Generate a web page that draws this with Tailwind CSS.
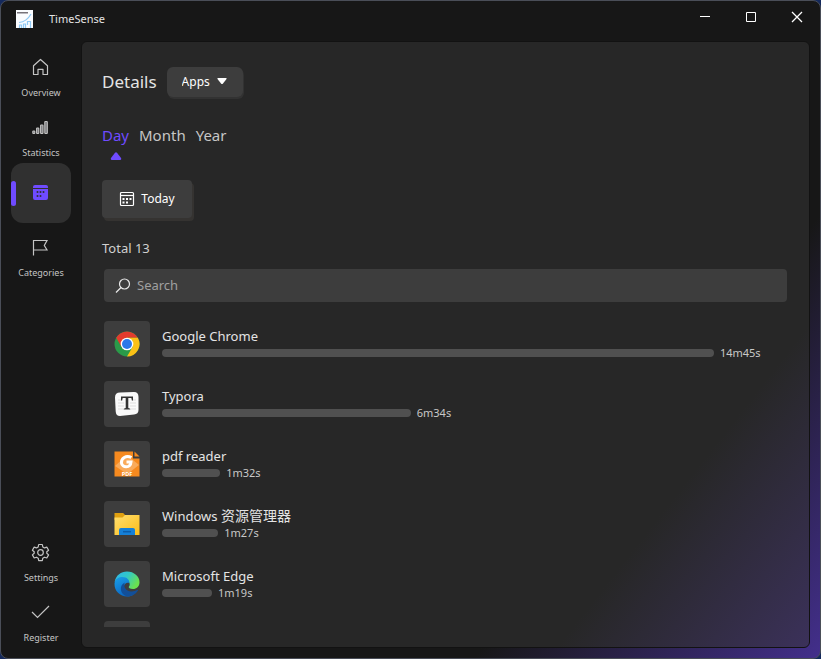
<!DOCTYPE html>
<html lang="en">
<head>
<meta charset="utf-8">
<meta name="viewport" content="width=device-width, initial-scale=1">
<title>TimeSense</title>
<script src="https://cdn.jsdelivr.net/npm/@tailwindcss/browser@4"></script>
</head>
<body class="h-screen overflow-hidden bg-[#14295c] font-['Noto_Sans','Noto_Sans_CJK_SC',sans-serif] text-[#e4e4e4]">
<div class="flex h-full flex-col rounded-lg border border-[#4a4e58] bg-[linear-gradient(128deg,#171717_74%,#432f8c_100%)]">
  <header class="flex h-9 shrink-0 items-center justify-between pl-[15px]">
    <div class="flex items-center gap-[15px]">
      <svg class="size-[18px]" viewBox="0 0 18 18" aria-hidden="true">
        <path fill="#fafcff" d="M0 0h17v18H0z"/>
        <path fill="#77737a" d="M1 2h11v1.500H1z"/>
        <path fill="none" stroke="#8fc9f5" stroke-width="1.200" d="M3 12.500c5-.5 9-3 12-8.500M3.500 18v-3h2v3M7.500 18v-4h2v4M11.500 15v-3.500h3V18"/>
      </svg>
      <span class="text-[11px] leading-4">TimeSense</span>
    </div>
    <div class="flex h-8 self-start text-white">
      <button class="grid w-[46px] place-items-center" aria-label="Minimize"><svg class="size-3" viewBox="0 0 12 12" fill="none" stroke="currentColor"><path d="M1 5.500h10"/></svg></button>
      <button class="grid w-[46px] place-items-center" aria-label="Maximize"><svg class="size-3" viewBox="0 0 12 12" fill="none" stroke="currentColor"><path d="M1.500 1.500h9v9h-9z"/></svg></button>
      <button class="grid w-[46px] place-items-center" aria-label="Close"><svg class="size-3" viewBox="0 0 12 12" fill="none" stroke="currentColor" stroke-width="1.300"><path d="m1 1 10 10M11 1 1 11"/></svg></button>
    </div>
  </header>

  <div class="flex min-h-0 flex-1 pt-1 pr-2.5 pb-2.5">
    <nav class="flex w-20 shrink-0 flex-col items-center pt-0.5 text-[9px] leading-3 text-[#c4c4c4]">
      <a href="#" class="flex h-15 w-15 flex-col items-center gap-2.5 pt-3.5">
        <svg class="size-5" viewBox="0 0 20 20" fill="none" stroke="currentColor" stroke-width="1.200" stroke-linejoin="round"><path d="M2.500 8.800 9.500 2.500l7 6.300V17.500H12v-5.200H7v5.200H2.500z"/></svg>Overview
      </a>
      <a href="#" class="flex h-15 w-15 flex-col items-center gap-2.5 pt-3.5">
        <svg class="size-5" viewBox="0 0 20 20" fill="#77777a" stroke="currentColor" stroke-width="1.100"><rect x="1.800" y="14" width="2" height="2.500" rx=".6"/><rect x="5.600" y="11" width="2.200" height="5.500" rx=".6"/><rect x="9.600" y="8" width="2.400" height="8.500" rx=".6"/><rect x="13.800" y="4.500" width="2.500" height="12" rx=".6"/></svg>Statistics
      </a>
      <a href="#" aria-label="Details" aria-current="page" class="flex h-15 w-15 items-center rounded-xl bg-[#303030] text-[#6f4bff]">
        <span class="h-[25px] w-[5px] rounded-sm bg-current"></span>
        <svg class="mb-0.5 ml-4 size-[17px]" viewBox="0 0 17 17"><path fill="currentColor" d="M3 1h11q2 0 2 2v11q0 2-2 2H3q-2 0-2-2V3q0-2 2-2z"/><path stroke="#303030" d="M1 4.500h15"/><g fill="#303030"><circle cx="8.500" cy="8" r="1"/><circle cx="11.500" cy="8" r="1"/><circle cx="5.500" cy="8" r="1"/><circle cx="5.500" cy="12" r="1"/><circle cx="8.500" cy="12" r="1"/></g></svg>
      </a>
      <a href="#" class="flex h-15 w-15 flex-col items-center gap-2.5 pt-3.5">
        <svg class="size-5" viewBox="0 0 20 20" fill="none" stroke="currentColor" stroke-width="1.200"><path d="M2.500 18.500V3.500h13.500L13.300 8.500l2.700 4.500H2.500"/></svg>Categories
      </a>
      <a href="#" class="mt-auto flex h-15 w-15 flex-col items-center gap-2.5 pt-3.5">
        <svg class="size-5" viewBox="0 0 20 20" fill="none" stroke="currentColor" stroke-width="1.200" stroke-linejoin="round"><path d="M7.700 2.500h3.600l.5 2.400 1.700 1 2.300-.8 1.800 3.100-1.800 1.600v1.500l1.800 1.600-1.800 3.100-2.300-.8-1.700 1-.5 2.400H7.700l-.5-2.400-1.700-1-2.300.8-1.800-3.100 1.800-1.600V9.800L1.400 8.200l1.800-3.100 2.300.8 1.700-1z"/><circle cx="9.500" cy="10.500" r="2.800"/></svg>Settings
      </a>
      <a href="#" class="flex h-15 w-15 flex-col items-center gap-2.5 pt-3.5">
        <svg class="size-5" viewBox="0 0 20 20" fill="none" stroke="currentColor" stroke-width="1.200"><path d="m1 10 5.500 5.500L18 4"/></svg>Register
      </a>
    </nav>

    <main class="flex min-w-0 flex-1 flex-col rounded-md border border-[#121212] bg-[linear-gradient(128deg,#272727_79%,#3b315a_100%)] px-5 pt-6 pb-5">
      <div class="flex items-center gap-2.5">
        <h1 class="text-[17px] leading-8">Details</h1>
        <div class="relative">
          <select aria-label="Details type" class="h-[30px] w-[76px] appearance-none rounded-md bg-[#3d3d3d] pl-[15px] text-xs text-white shadow-[1px_2px_0_#323232]"><option>Apps</option><option>Websites</option></select>
          <svg class="pointer-events-none absolute top-[10px] right-4 h-2 w-[10px]" viewBox="0 0 10 8" fill="#fff"><path d="M1 1h8q1 0 .5 1L6 6.500q-1 1-2 0L.5 2Q0 1 1 1z"/></svg>
        </div>
      </div>

      <div class="mt-[25px] flex gap-2.5 text-[15px] leading-6 text-[#c6c6c6]">
        <button class="flex flex-col items-center gap-[5px] text-[#6f4bff]">Day
          <svg class="h-2 w-3" viewBox="0 0 12 8" fill="currentColor"><path d="M5 .8q1-1 2 0L11 6q.8 2-1 2H2Q.2 8 1 6z"/></svg>
        </button>
        <button class="self-start">Month</button>
        <button class="self-start">Year</button>
      </div>

      <button class="mt-5 flex h-[38px] w-[90px] shrink-0 items-center justify-center gap-1.5 rounded bg-[#3d3d3d] text-xs text-white shadow-[2px_3px_0_#353331]">
        <svg class="size-4" viewBox="0 0 16 16" fill="none" stroke="currentColor" stroke-width="1.200"><rect x="1.500" y="1.500" width="13" height="13" rx="1"/><path d="M1.500 4.500h13"/><g fill="currentColor" stroke="none"><path d="M7 7h2v2H7zM10.500 7h2v2h-2zM3.500 7h2v2h-2zM3.500 10.500h2v2h-2zM7 10.500h2v2H7z"/></g></svg>Today
      </button>

      <p class="mt-5 text-[13px] leading-5 text-[#d0d0d0]">Total 13</p>

      <div class="mx-0.5 mt-[11px] flex h-[33px] shrink-0 items-center gap-1.5 rounded bg-[#3d3d3d] px-[11px]">
        <svg class="size-4" viewBox="0 0 16 16" fill="none" stroke="#e8e8e8" stroke-width="1.200"><circle cx="9.500" cy="6" r="5"/><path d="m6 9.500-5 5"/></svg>
        <input type="search" aria-label="Search" placeholder="Search" class="min-w-0 flex-1 bg-transparent text-[13px] outline-none placeholder:text-[#a0a0a0]">
      </div>

      <ul class="mx-0.5 mt-[19px] flex min-h-0 flex-1 flex-col gap-3.5 overflow-hidden">
        <li class="flex shrink-0 gap-3">
          <div class="grid size-[46px] shrink-0 place-items-center rounded bg-[#3d3d3d]">
            <svg class="size-[26px]" viewBox="0 0 26 26"><circle cx="13" cy="13" r="12.500" fill="#2a9a49"/><path fill="#e33b2e" d="M2.200 6.700A12.500 12.500 0 0 1 23.800 6.700H13L7.500 16z"/><path fill="#fbc116" d="M23.800 6.700A12.500 12.500 0 0 1 13 25.500l5.400-9.300L18.500 10 13 6.700z"/><circle cx="13" cy="13" r="6.300" fill="#fff"/><circle cx="13" cy="13" r="5" fill="#2b78e8"/></svg>
          </div>
          <div class="min-w-0 flex-1 pt-1.5">
            <p class="text-[13px] leading-[18px]">Google Chrome</p>
            <div class="flex h-4 items-center gap-1.5 text-[11px] leading-4 text-[#c8c8c8]"><div class="h-2 rounded-full bg-[#505050]" style="width:88.3%"></div>14m45s</div>
          </div>
        </li>
        <li class="flex shrink-0 gap-3">
          <div class="grid size-[46px] shrink-0 place-items-center rounded bg-[#3d3d3d]">
            <svg class="size-[26px]" viewBox="0 0 26 26"><path fill="#fafafa" d="M6 1.500 20 1q4.500 0 4.500 5v13q0 4-4.500 4.500L6 25q-4 0-4.300-4.500L1 6.500q0-5 5-5z"/><path stroke="#ddd" d="M4 9h5M4 12h6M4 15h6M4 18h5M17 9h5M16 12h6M16 15h6M17 18h5"/><path fill="#333" d="M7 5.500h12v4h-1l-.7-2.500h-3v10l2 .7v.8H9.700v-.8l2-.7V7h-3L8 9.500H7z"/></svg>
          </div>
          <div class="min-w-0 flex-1 pt-1.5">
            <p class="text-[13px] leading-[18px]">Typora</p>
            <div class="flex h-4 items-center gap-1.5 text-[11px] leading-4 text-[#c8c8c8]"><div class="h-2 rounded-full bg-[#505050]" style="width:39.8%"></div>6m34s</div>
          </div>
        </li>
        <li class="flex shrink-0 gap-3">
          <div class="grid size-[46px] shrink-0 place-items-center rounded bg-[#3d3d3d]">
            <svg class="size-[26px]" viewBox="0 0 26 26"><path fill="#f68a1f" d="M.5.500H19v7h6.500v18H.5z"/><path fill="#f68a1f" d="M20.500.500v5h5z"/><path fill="#f9ab5c" d="m13 4 12 10-9 7H10L1 15z"/><path fill="none" stroke="#fff" stroke-width="3" d="M17.500 6.500C12 3.500 7 7.500 7.500 12c.5 5 9 5.500 9.500-1h-4.500"/><text x="13" y="24.500" text-anchor="middle" font-size="5.500" font-weight="700" fill="#fff">PDF</text></svg>
          </div>
          <div class="min-w-0 flex-1 pt-1.5">
            <p class="text-[13px] leading-[18px]">pdf reader</p>
            <div class="flex h-4 items-center gap-1.5 text-[11px] leading-4 text-[#c8c8c8]"><div class="h-2 rounded-full bg-[#505050]" style="width:9.3%"></div>1m32s</div>
          </div>
        </li>
        <li class="flex shrink-0 gap-3">
          <div class="grid size-[46px] shrink-0 place-items-center rounded bg-[#3d3d3d]">
            <svg class="size-[26px]" viewBox="0 0 26 26"><defs><linearGradient id="folder" x2="1" y2="1"><stop stop-color="#ffdf70"/><stop offset="1" stop-color="#fdbd18"/></linearGradient></defs><path fill="#e0a010" d="M.5 2h8.700L11 4v5H.5z"/><path fill="url(#folder)" d="M.5 6.500h8L11 4h14.500v20H.5z"/><path fill="#1580d8" d="M7 17h12q2 0 2 2v5H5v-5q0-2 2-2z"/><path stroke="#0b5cab" stroke-width="1.500" d="M9 20.700h8"/></svg>
          </div>
          <div class="min-w-0 flex-1 pt-1.5">
            <p class="text-[13px] leading-[18px]">Windows <span lang="zh-CN" class="text-sm leading-[18px]">资源管理器</span></p>
            <div class="flex h-4 items-center gap-1.5 text-[11px] leading-4 text-[#c8c8c8]"><div class="h-2 rounded-full bg-[#505050]" style="width:9%"></div>1m27s</div>
          </div>
        </li>
        <li class="flex shrink-0 gap-3">
          <div class="grid size-[46px] shrink-0 place-items-center rounded bg-[#3d3d3d]">
            <svg class="size-[26px]" viewBox="0 0 26 26"><defs><linearGradient id="edgeTop" x2="1" y2=".5"><stop stop-color="#2fb4ee"/><stop offset=".5" stop-color="#31c7c9"/><stop offset="1" stop-color="#6be04e"/></linearGradient><linearGradient id="edgeLeft" x2=".5" y2="1"><stop stop-color="#1a9fe8"/><stop offset="1" stop-color="#0a66c2"/></linearGradient></defs><path fill="url(#edgeTop)" d="M.6 11C2 4 7 .5 13 .5c7 0 12.500 5 12.500 10.700 0 4.300-3 6.800-6.500 6.800-3 0-4.700-1.200-4.200-2.300.8-1 1.200-2 .7-3.500C14 8 5 5 .6 11z"/><path fill="url(#edgeLeft)" d="M.5 12.500C1 7.500 5 6 8.500 6c4.500 0 7 3 7 6-5-2-8 5-3.500 9 2 1.800 5 2.700 8 2-2 2-5 2.600-7 2.500C6 25.500.200 20 .5 12.500z"/><path fill="#124f99" d="M10.700 11.500c-1.200 3.500.3 9 7 9 2.300 0 3.800-.8 5.500-1.500.7-.2 1 .2.6.8-2.300 3.700-6 5.700-10.500 5.700C6 24 4.500 14.500 10.700 11.500z"/></svg>
          </div>
          <div class="min-w-0 flex-1 pt-1.5">
            <p class="text-[13px] leading-[18px]">Microsoft Edge</p>
            <div class="flex h-4 items-center gap-1.5 text-[11px] leading-4 text-[#c8c8c8]"><div class="h-2 rounded-full bg-[#505050]" style="width:8%"></div>1m19s</div>
          </div>
        </li>
        <li class="flex shrink-0 gap-3"><div class="size-[46px] rounded bg-[#3d3d3d]"></div></li>
      </ul>
    </main>
  </div>
</div>
</body>
</html>
